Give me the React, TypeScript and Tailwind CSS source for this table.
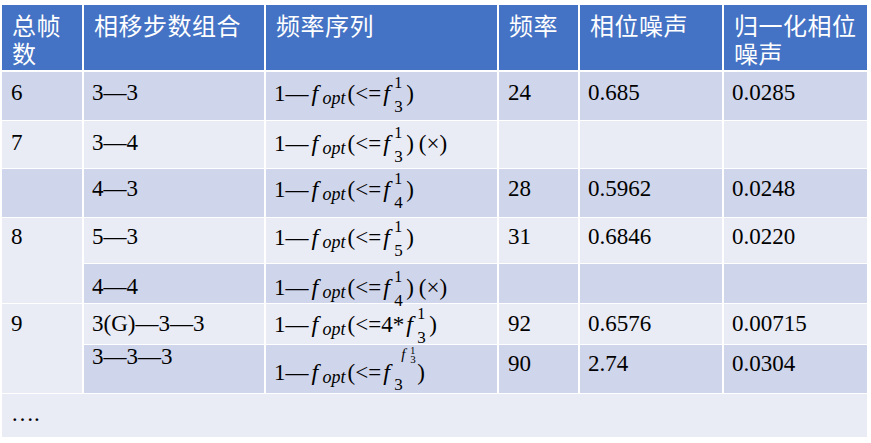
import React from "react";

const DARK = "bg-[#cfd5ea]";
const LIGHT = "bg-[#e9ebf5]";

type CellProps = { className?: string; children?: React.ReactNode };

function H({ children }: { children?: React.ReactNode }) {
  return (
    <div className="mb-[1px] bg-[#4472c4] pl-[10px] pt-[6px] text-[24px] leading-[28px] tracking-[0.5px] text-white whitespace-nowrap font-['Noto_Sans_CJK_SC','Microsoft_YaHei',sans-serif]">
      {children}
    </div>
  );
}

function C({ className = "", children }: CellProps) {
  return <div className={"whitespace-nowrap " + className}>{children}</div>;
}

function Lead() {
  return (
    <>
      1—<span className="inline-block w-[14px] pl-[3px] text-[24px] italic">f</span>
      <span className="relative top-[3px] text-[18px] italic">opt</span>
      <span className="ml-[2px]">(</span>&lt;=
    </>
  );
}

function MainF() {
  return <span className="inline-block w-[13px] pl-[2px] text-[24px] italic">f</span>;
}

function SS({ sub, sup }: { sub: string; sup: string }) {
  return (
    <span className="relative inline-block h-0 w-[12px]">
      <span className="absolute left-0 top-[-26px] text-[16px] leading-[16px]">{sup}</span>
      <span className="absolute left-0 top-[-3px] text-[17px] leading-[17px]">{sub}</span>
    </span>
  );
}

function Formula({ sub, pre = "", cross = false }: { sub: string; pre?: string; cross?: boolean }) {
  return (
    <>
      <Lead />
      {pre}
      <MainF />
      <SS sub={sub} sup="1" />)
      {cross ? <span className="ml-[5px]">(×)</span> : null}
    </>
  );
}

function NestedFormula() {
  return (
    <>
      <Lead />
      <MainF />
      <span className="relative inline-block h-0 w-[23px]">
        <span className="absolute left-0 top-[-4px] text-[17px] leading-[17px]">3</span>
        <span className="absolute left-[7px] top-[-33px] text-[15px] leading-[15px] italic">f</span>
        <span className="absolute left-[16px] top-[-34px] text-[10px] leading-[10px]">1</span>
        <span className="absolute left-[16px] top-[-26px] text-[11px] leading-[11px]">3</span>
      </span>
      )
    </>
  );
}

export default function App() {
  return (
    <div className="min-h-screen bg-white pl-[2px] pt-[5px]">
      <div className="grid w-[865px] grid-cols-[80px_180px_231px_79px_142px_143px] grid-rows-[66px_48px_47px_48px_45px_39px_40px_48px_43px] gap-x-[2px] gap-y-[1px] font-['Liberation_Serif','Times_New_Roman',serif] text-[23px] leading-[24px] text-black">
        {/* header */}
        <H>
          总帧
          <br />数
        </H>
        <H>相移步数组合</H>
        <H>频率序列</H>
        <H>频率</H>
        <H>相位噪声</H>
        <H>
          归一化相位
          <br />
          噪声
        </H>

        {/* row 1 */}
        <C className={`${DARK} pl-[9px] pt-[9px]`}>6</C>
        <C className={`${DARK} pl-[8px] pt-[9px]`}>3—3</C>
        <C className={`${DARK} pl-[8px] pt-[9px]`}>
          <Formula sub="3" />
        </C>
        <C className={`${DARK} pl-[9px] pt-[9px]`}>24</C>
        <C className={`${DARK} pl-[8px] pt-[9px]`}>0.685</C>
        <C className={`${DARK} pl-[8px] pt-[9px]`}>0.0285</C>

        {/* row 2 */}
        <C className={`${LIGHT} pl-[9px] pt-[10px]`}>7</C>
        <C className={`${LIGHT} pl-[8px] pt-[10px]`}>3—4</C>
        <C className={`${LIGHT} pl-[8px] pt-[10px]`}>
          <Formula sub="3" cross />
        </C>
        <C className={LIGHT} />
        <C className={LIGHT} />
        <C className={LIGHT} />

        {/* row 3 */}
        <C className={DARK} />
        <C className={`${DARK} pl-[8px] pt-[8px]`}>4—3</C>
        <C className={`${DARK} pl-[8px] pt-[8px]`}>
          <Formula sub="4" />
        </C>
        <C className={`${DARK} pl-[9px] pt-[8px]`}>28</C>
        <C className={`${DARK} pl-[8px] pt-[8px]`}>0.5962</C>
        <C className={`${DARK} pl-[8px] pt-[8px]`}>0.0248</C>

        {/* row 4 */}
        <C className={`${LIGHT} row-span-2 pl-[9px] pt-[7px]`}>8</C>
        <C className={`${LIGHT} pl-[8px] pt-[7px]`}>5—3</C>
        <C className={`${LIGHT} pl-[8px] pt-[7px]`}>
          <Formula sub="5" />
        </C>
        <C className={`${LIGHT} pl-[9px] pt-[7px]`}>31</C>
        <C className={`${LIGHT} pl-[8px] pt-[7px]`}>0.6846</C>
        <C className={`${LIGHT} pl-[8px] pt-[7px]`}>0.0220</C>

        {/* row 5 */}
        <C className={`${DARK} pl-[8px] pt-[11px]`}>4—4</C>
        <C className={`${DARK} pl-[8px] pt-[11px]`}>
          <Formula sub="4" cross />
        </C>
        <C className={DARK} />
        <C className={DARK} />
        <C className={DARK} />

        {/* row 6 */}
        <C className={`${LIGHT} row-span-2 pl-[9px] pt-[8px]`}>9</C>
        <C className={`${LIGHT} pl-[8px] pt-[8px]`}>3(G)—3—3</C>
        <C className={`${LIGHT} pl-[8px] pt-[8px]`}>
          <Formula sub="3" pre="4*" />
        </C>
        <C className={`${LIGHT} pl-[9px] pt-[8px]`}>92</C>
        <C className={`${LIGHT} pl-[8px] pt-[8px]`}>0.6576</C>
        <C className={`${LIGHT} pl-[8px] pt-[8px]`}>0.00715</C>

        {/* row 7 */}
        <C className={`${DARK} pl-[8px] pt-0`}>3—3—3</C>
        <C className={`${DARK} pl-[8px] pt-[15px]`}>
          <NestedFormula />
        </C>
        <C className={`${DARK} pl-[9px] pt-[7px]`}>90</C>
        <C className={`${DARK} pl-[8px] pt-[7px]`}>2.74</C>
        <C className={`${DARK} pl-[8px] pt-[7px]`}>0.0304</C>

        {/* row 8 */}
        <C className={`${LIGHT} col-span-6 pl-[9px] pt-[8px]`}>….</C>
      </div>
    </div>
  );
}
